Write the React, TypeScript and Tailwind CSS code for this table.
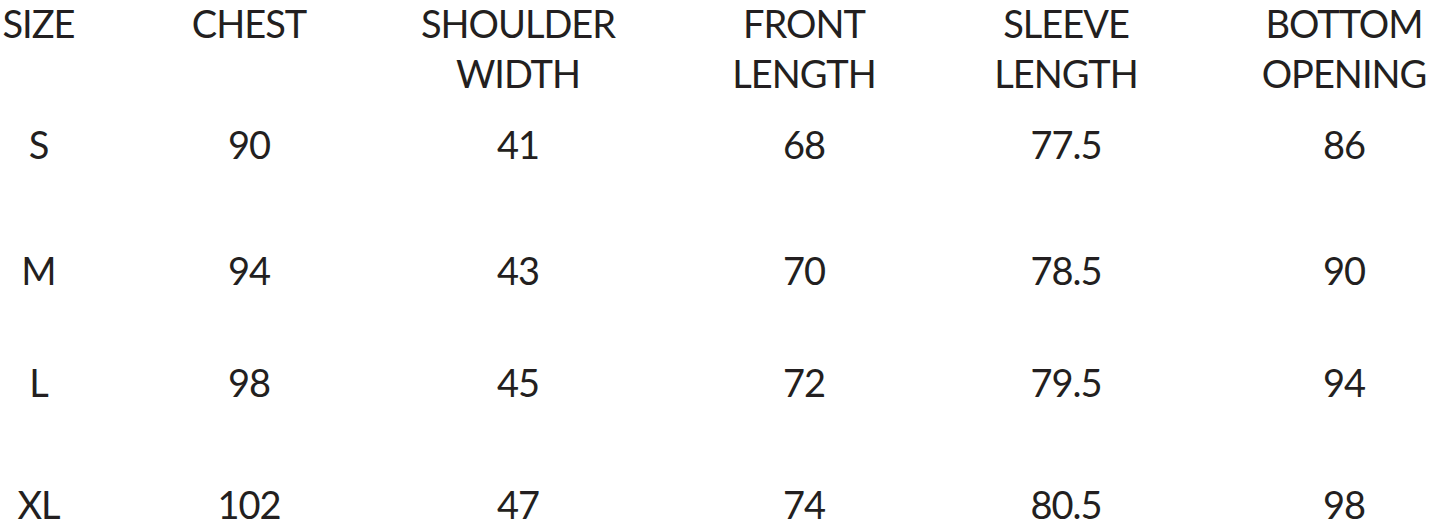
const cols = [
  "w-[77px]",
  "ml-[72px] w-[200px]",
  "ml-[69px] w-[200px]",
  "ml-[86px] w-[200px]",
  "ml-[62px] w-[200px]",
  "ml-[85px] w-[186px]",
];

const headers = [
  ["SIZE"],
  ["CHEST"],
  ["SHOULDER", "WIDTH"],
  ["FRONT", "LENGTH"],
  ["SLEEVE", "LENGTH"],
  ["BOTTOM", "OPENING"],
];

const rows = [
  { gap: "mt-[23px]", cells: ["S", "90", "41", "68", "77.5", "86"] },
  { gap: "mt-[76px]", cells: ["M", "94", "43", "70", "78.5", "90"] },
  { gap: "mt-[62px]", cells: ["L", "98", "45", "72", "79.5", "94"] },
  { gap: "mt-[72px]", cells: ["XL", "102", "47", "74", "80.5", "98"] },
];

export default function App() {
  return (
    <div
      className="w-[1437px] h-[530px] overflow-hidden bg-white text-[#231f20] text-[38px] font-normal tracking-[-1px]"
      style={{ fontFamily: "Lato, 'DejaVu Sans', sans-serif" }}
    >
      <div className="flex">
        {headers.map((lines, i) => (
          <div
            key={i}
            className={`${cols[i]} shrink-0 flex flex-col items-center gap-[4px] leading-[46px] whitespace-nowrap`}
          >
            {lines.map((l) => (
              <div key={l}>{l}</div>
            ))}
          </div>
        ))}
      </div>
      {rows.map((row) => (
        <div key={row.cells[0]} className={`${row.gap} flex leading-[50px]`}>
          {row.cells.map((c, i) => (
            <div key={i} className={`${cols[i]} shrink-0 text-center`}>
              {c}
            </div>
          ))}
        </div>
      ))}
    </div>
  );
}
